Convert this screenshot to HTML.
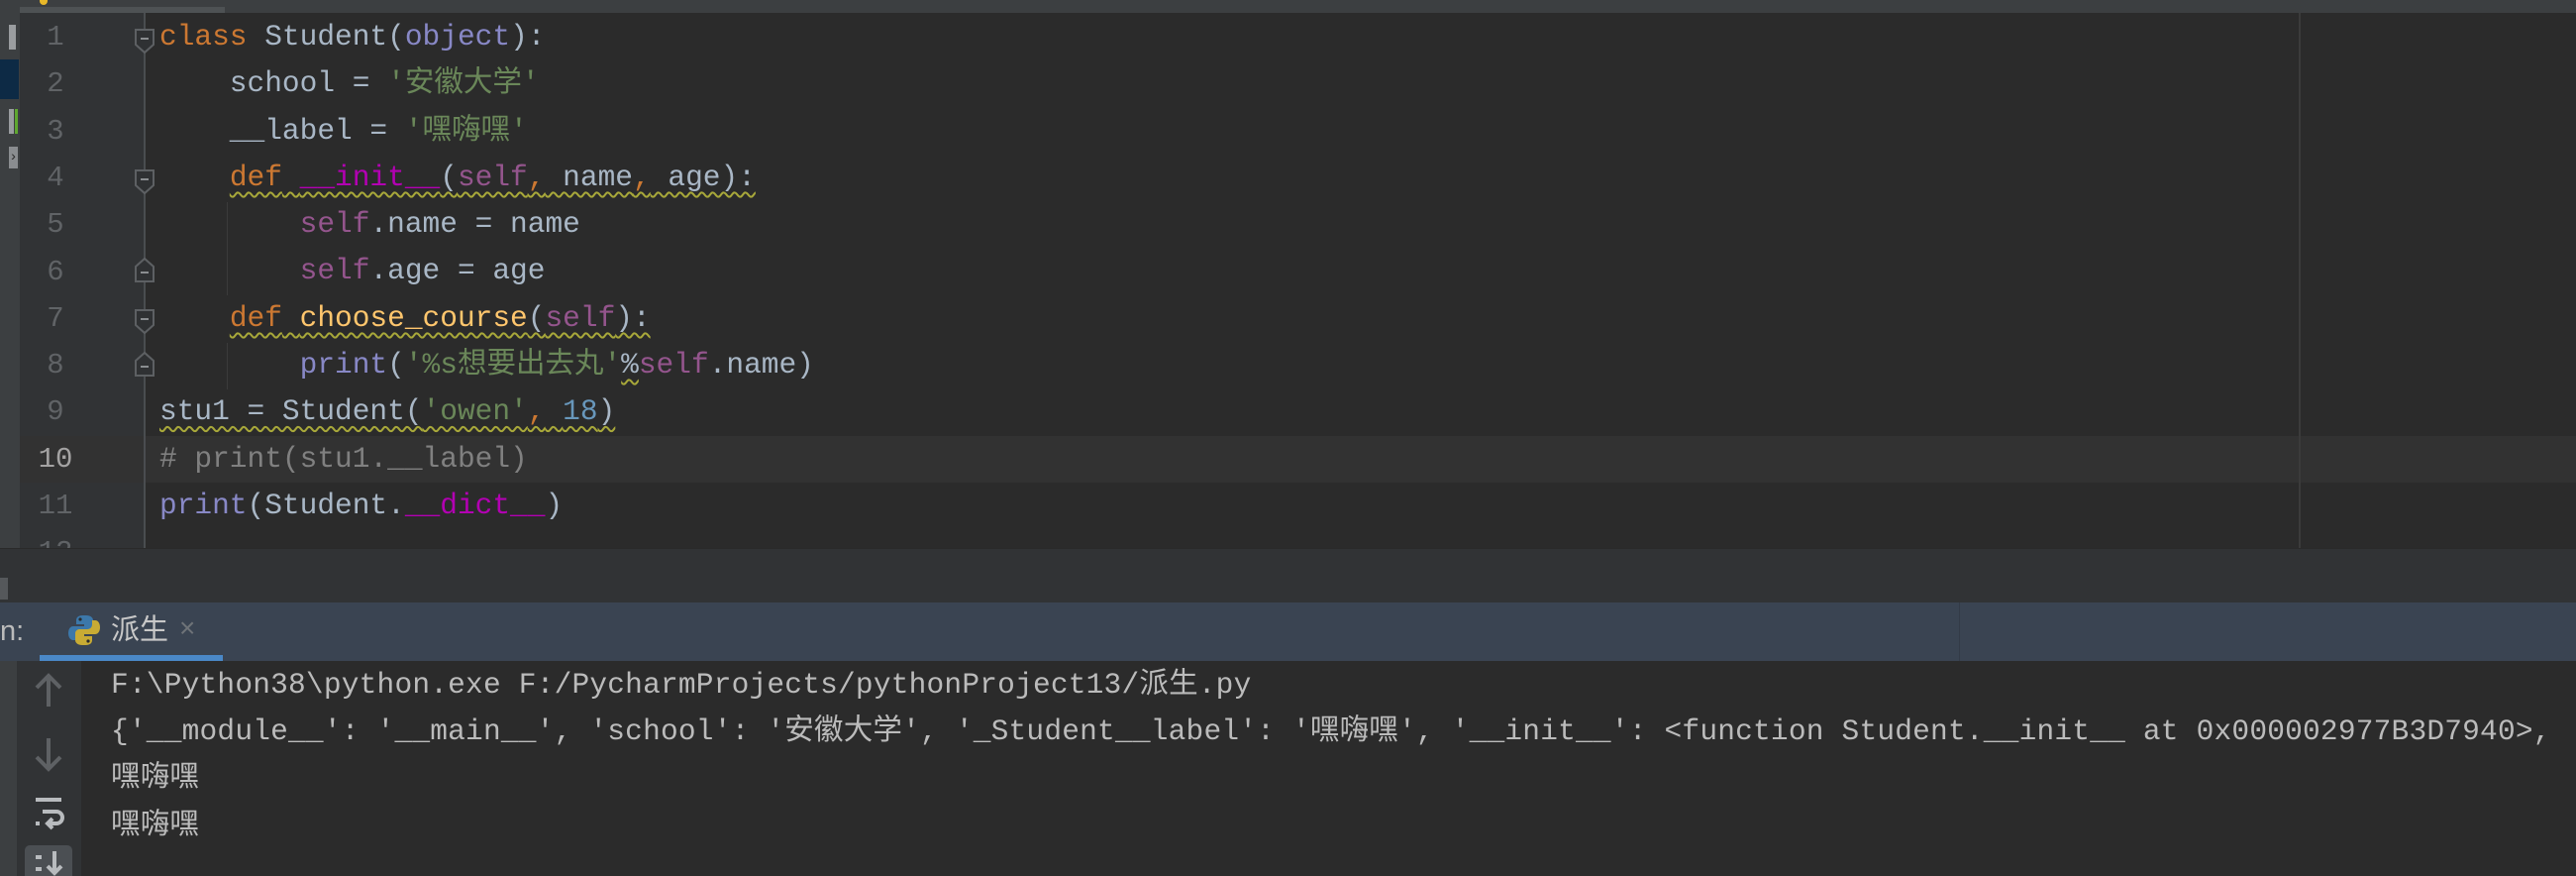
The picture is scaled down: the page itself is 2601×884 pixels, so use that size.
<!DOCTYPE html>
<html><head><meta charset="utf-8"><style>
*{margin:0;padding:0;box-sizing:border-box}
body{width:2601px;height:884px;background:#2b2b2b;position:relative;overflow:hidden;font-family:"Liberation Mono","Noto Sans CJK SC",monospace;}
.abs{position:absolute}
.code{font-size:29.5px;line-height:47.3px;white-space:pre;color:#a9b7c6;}
.ln{position:absolute;left:20px;width:72px;text-align:center;font-size:29px;color:#606366;line-height:47.3px}
.kw{color:#cc7832}.sf{color:#94558d}.st{color:#6a8759}.nu{color:#6897bb}.bi{color:#8888c6}.fn{color:#ffc66d}.mg{color:#b200b2}.cm{color:#808080}
.w{text-decoration:underline wavy #a8a83a;text-decoration-thickness:1.5px;text-underline-offset:6px}
.con{font-size:29.5px;line-height:47.5px;white-space:pre;color:#bbbbbb;position:absolute;left:112px;letter-spacing:0.2px}
</style></head><body>
<div class="abs" style="left:0;top:0;width:2601px;height:13px;background:#3c3f41"></div>
<div class="abs" style="left:20px;top:7px;width:207px;height:6px;background:#4e5254"></div>
<div class="abs" style="left:40px;top:0;width:8px;height:5px;background:#e8b829;border-radius:0 0 4px 4px"></div>
<div class="abs" style="left:0;top:13px;width:20px;height:595px;background:#3c3f41"></div>
<div class="abs" style="left:9px;top:25px;width:7px;height:25px;background:#9a9da0"></div>
<div class="abs" style="left:0;top:60px;width:19px;height:40px;background:#0d2a45"></div>
<div class="abs" style="left:9px;top:110px;width:5px;height:25px;background:#9a9da0"></div>
<div class="abs" style="left:15px;top:110px;width:3px;height:25px;background:#5fa830"></div>
<div class="abs" style="left:9px;top:148px;width:9px;height:22px;background:#8a8d90;color:#2b2b2b;font-size:14px;line-height:22px;text-align:center">›</div>
<div class="abs" style="left:20px;top:13px;width:126px;height:540px;background:#313335"></div>
<div class="abs" style="left:20px;top:440px;width:2581px;height:47px;background:#323232"></div>
<div class="abs" style="left:145px;top:13px;width:2px;height:540px;background:#4a4d50"></div>
<div class="abs" style="left:2321px;top:13px;width:2px;height:540px;background:#3b3b3b"></div>
<div class="abs" style="left:229px;top:204px;width:1px;height:94px;background:#3b3b3b"></div>
<div class="abs" style="left:229px;top:346px;width:1px;height:47px;background:#3b3b3b"></div>
<svg class="abs" style="left:0;top:0" width="200" height="560" viewBox="0 0 200 560">
<g fill="#2f3133" stroke="#5d6063" stroke-width="2">
<path d="M137 30h18v15l-9 8l-9-8z"/>
<path d="M137 172h18v15l-9 8l-9-8z"/>
<path d="M137 284v-15l9-8l9 8v15z"/>
<path d="M137 313h18v15l-9 8l-9-8z"/>
<path d="M137 379v-15l9-8l9 8v15z"/>
</g>
<g stroke="#8a8d90" stroke-width="2"><path d="M142 39h8M142 181h8M142 275h8M142 322h8M142 370h8"/></g>
</svg>
<div class="ln" style="top:14px">1</div>
<div class="ln" style="top:61.3px">2</div>
<div class="ln" style="top:108.6px">3</div>
<div class="ln" style="top:155.9px">4</div>
<div class="ln" style="top:203.2px">5</div>
<div class="ln" style="top:250.5px">6</div>
<div class="ln" style="top:297.8px">7</div>
<div class="ln" style="top:345.1px">8</div>
<div class="ln" style="top:392.4px">9</div>
<div class="ln" style="top:439.7px;color:#a4a3a3">10</div>
<div class="ln" style="top:487px">11</div>
<div class="ln" style="top:534.3px">12</div>
<div class="abs code" style="left:161px;top:14px"><span class="kw">class</span> Student(<span class="bi">object</span>):
    school = <span class="st">'安徽大学'</span>
    __label = <span class="st">'嘿嗨嘿'</span>
    <span class="w"><span class="kw">def</span> <span class="mg">__init__</span>(<span class="sf">self</span><span class="kw">,</span> name<span class="kw">,</span> age):</span>
        <span class="sf">self</span>.name = name
        <span class="sf">self</span>.age = age
    <span class="w"><span class="kw">def</span> <span class="fn">choose_course</span>(<span class="sf">self</span>):</span>
        <span class="bi">print</span>(<span class="st">'%s想要出去丸'</span><span class="w">%</span><span class="sf">self</span>.name)
<span class="w">stu1 = Student(<span class="st">'owen'</span><span class="kw">,</span> <span class="nu">18</span>)</span>
<span class="cm"># print(stu1.__label)</span>
<span class="bi">print</span>(Student.<span class="mg">__dict__</span>)</div>
<div class="abs" style="left:0;top:553px;width:2601px;height:55px;background:#313335;border-top:1px solid #2a2a2a"></div>
<div class="abs" style="left:0;top:583px;width:8px;height:22px;background:#55585b"></div>
<div class="abs" style="left:0;top:608px;width:2601px;height:59px;background:#3a4452"></div>
<div class="abs" style="left:1978px;top:608px;width:1px;height:59px;background:#333b47"></div>
<div class="abs" style="left:0;top:619px;font-family:'Liberation Sans',sans-serif;font-size:29px;color:#bbbbbb;line-height:36px">n:</div>
<svg class="abs" style="left:69px;top:620px" width="32" height="32" viewBox="0 0 32 32">
<path d="M15 1c-6 0-7 3-7 5v4h8v2H5c-3 0-5 3-5 7s2 7 5 7h3v-4c0-3 2-5 5-5h8c2 0 4-2 4-4V6c0-3-3-5-7-5z" fill="#3c78aa"/>
<path d="M17 31c6 0 7-3 7-5v-4h-8v-2h11c3 0 5-3 5-7s-2-7-5-7h-3v4c0 3-2 5-5 5h-8c-2 0-4 2-4 4v7c0 3 3 5 7 5z" fill="#c8ab34"/>
<circle cx="12" cy="5" r="1.6" fill="#2b2b2b"/><circle cx="20" cy="27" r="1.6" fill="#2b2b2b"/>
</svg>
<div class="abs" style="left:112px;top:616px;font-family:'Liberation Sans','Noto Sans CJK SC',sans-serif;font-size:29px;color:#c8c8c8;line-height:40px">派生</div>
<div class="abs" style="left:181px;top:614px;font-family:'Liberation Sans',sans-serif;font-size:28px;color:#6e7378;line-height:40px">×</div>
<div class="abs" style="left:40px;top:661px;width:185px;height:6px;background:#4a88c7"></div>
<div class="abs" style="left:0;top:667px;width:17px;height:217px;background:#3c3f41"></div>
<div class="abs" style="left:17px;top:667px;width:65px;height:217px;background:#313335"></div>
<svg class="abs" style="left:17px;top:667px" width="65" height="217" viewBox="0 0 65 217">
<g stroke="#5e6164" stroke-width="4" fill="none"><path d="M32 14v32M20 27l12-12l12 12"/><path d="M32 78v32M20 97l12 12l12-12"/></g>
<g stroke="#b8bbbe" stroke-width="4" fill="none"><path d="M19 140h26"/><path d="M26 152h14a6 6 0 0 1 0 12h-8"/><path d="M36 159l-5 5l5 5"/><path d="M19 164h4"/></g>
<rect x="8" y="186" width="48" height="40" rx="5" fill="#4b4f53"/>
<g stroke="#b8bbbe" stroke-width="4" fill="none"><path d="M19 198h6M19 210h6M38 192v22M31 207l7 7l7-7"/></g>
</svg>
<div class="con" style="top:668px">F:\Python38\python.exe F:/PycharmProjects/pythonProject13/派生.py</div>
<div class="con" style="top:715px">{'__module__': '__main__', 'school': '安徽大学', '_Student__label': '嘿嗨嘿', '__init__': &lt;function Student.__init__ at 0x000002977B3D7940&gt;,</div>
<div class="con" style="top:762px">嘿嗨嘿</div>
<div class="con" style="top:810px">嘿嗨嘿</div>
</body></html>
